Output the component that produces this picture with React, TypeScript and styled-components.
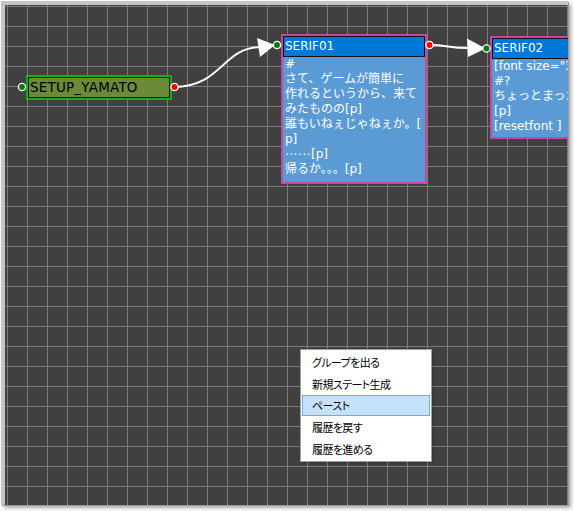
import React from "react";
import styled, { createGlobalStyle } from "styled-components";

const GlobalStyle = createGlobalStyle`
  html, body { margin: 0; padding: 0; background: #ffffff; }
  #root { width: 574px; height: 511px; }
`;

// canvas content origin in page coordinates
const OX = 5;
const OY = 5;

const Page = styled.div`
  width: 574px;
  height: 511px;
  box-sizing: border-box;
  padding: 1px 0 0 1px;
  background: #ffffff;
  overflow: hidden;
`;

const Canvas = styled.div`
  position: relative;
  width: 563px;
  height: 500px;
  border-left: 4px solid #c6c6c6;
  border-top: 4px solid #c6c6c6;
  background-color: #404040;
  background-image: linear-gradient(to right, #7c7c7c 1px, transparent 1px),
    linear-gradient(to bottom, #7c7c7c 1px, transparent 1px);
  background-size: 20px 20px;
  background-position: 2px 1px;
  box-shadow: 1px 1px 0 #9a9a9a, 3px 3px 4px rgba(0, 0, 0, 0.35);
  overflow: hidden;
  font-family: "DejaVu Sans", "Noto Sans CJK JP", sans-serif;
`;

const Placed = styled.div<{ $x: number; $y: number }>`
  position: absolute;
  left: ${(p) => p.$x - OX}px;
  top: ${(p) => p.$y - OY}px;
`;

const SetupNode = styled(Placed)`
  width: 146px;
  height: 25px;
  box-sizing: border-box;
  border: 2px solid #12b012;
  box-shadow: inset 0 0 0 1px #1c1c1c;
  background: #6b8a3a;
  color: #000;
  font-size: 13.5px;
  letter-spacing: 0.2px;
  line-height: 21px;
  padding-left: 2px;
  white-space: nowrap;
`;

const SerifNode = styled(Placed)<{ $h: number }>`
  width: 146px;
  height: ${(p) => p.$h}px;
  box-sizing: border-box;
  border: 2px solid #c8489e;
  display: flex;
  flex-direction: column;
  background: #5b9bd5;
`;

const Title = styled.div`
  height: 21px;
  box-sizing: border-box;
  border: 1px solid #111;
  background: #0078d7;
  color: #fff;
  font-size: 12px;
  line-height: 19px;
  padding-left: 1px;
  white-space: nowrap;
  overflow: hidden;
`;

const Body = styled.div`
  flex: 1;
  padding: 0 2px;
  color: #fff;
  font-size: 12px;
  overflow: hidden;
  display: flex;
  flex-direction: column;
`;

const Line = styled.div`
  height: 15px;
  line-height: 15px;
  white-space: pre;
`;

const Dots = styled.span`
  letter-spacing: 1px;
`;

const Edges = styled.svg`
  position: absolute;
  left: 0;
  top: 0;
  width: 563px;
  height: 500px;
  pointer-events: none;
`;

const Menu = styled(Placed)`
  width: 132px;
  height: 113px;
  box-sizing: border-box;
  border: 1px solid #a0a0a0;
  background: #fff;
  padding: 1px 1px;
  display: flex;
  flex-direction: column;
  font-family: "Noto Sans CJK JP", sans-serif;
  font-feature-settings: "palt";
  box-shadow: 1px 1px 2px rgba(0, 0, 0, 0.2);
`;

const MenuItem = styled.div<{ $active?: boolean }>`
  height: 22px;
  box-sizing: border-box;
  display: flex;
  align-items: center;
  padding-left: 9px;
  font-size: 11px;
  letter-spacing: -0.6px;
  color: #000;
  border: 1px solid ${(p) => (p.$active ? "#6aaeee" : "transparent")};
  background: ${(p) => (p.$active ? "#c6e1fb" : "transparent")};
`;

const serif01 = [
  "#",
  "さて、ゲームが簡単に",
  "作れるというから、来て",
  "みたものの[p]",
  "誰もいねぇじゃねぇか。[",
  "p]",
];

const serif02 = ['[font size="30"]', "#?", "ちょっとまったー！", "[p]", "[resetfont ]"];

const Port: React.FC<{ x: number; y: number; out?: boolean }> = ({ x, y, out }) => (
  <circle cx={x} cy={y} r={3.6} fill={out ? "#ff0000" : "#0a7a0a"} stroke="#ffffff" strokeWidth={1.3} />
);

export default function App() {
  return (
    <>
      <GlobalStyle />
      <Page>
        <Canvas>
          <SetupNode $x={26} $y={75}>SETUP_YAMATO</SetupNode>

          <SerifNode $x={281} $y={34} $h={150}>
            <Title>SERIF01</Title>
            <Body>
              {serif01.map((l, i) => (
                <Line key={i}>{l}</Line>
              ))}
              <Line>
                <Dots>⋯⋯</Dots>[p]
              </Line>
              <Line>帰るか。。。[p]</Line>
            </Body>
          </SerifNode>

          <SerifNode $x={490} $y={36} $h={103}>
            <Title>SERIF02</Title>
            <Body>
              {serif02.map((l, i) => (
                <Line key={i}>{l}</Line>
              ))}
            </Body>
          </SerifNode>

          <Edges viewBox={`${OX} ${OY} 563 500`}>
            <path d="M174,87 C222,87 222,47 262,47" fill="none" stroke="#fff" strokeWidth={2} />
            <polygon points="257,38 275,45 260,57" fill="#fff" />
            <path d="M429,45 C448,45 448,48 468,48" fill="none" stroke="#fff" strokeWidth={2} />
            <polygon points="467,38.5 485.5,48.5 468,57" fill="#fff" />
            <Port x={22} y={87} />
            <Port x={174.5} y={87} out />
            <Port x={277} y={45} />
            <Port x={429.5} y={45} out />
            <Port x={486.5} y={48.5} />
          </Edges>

          <Menu $x={300} $y={349}>
            <MenuItem>グループを出る</MenuItem>
            <MenuItem>新規ステート生成</MenuItem>
            <MenuItem $active>ペースト</MenuItem>
            <MenuItem>履歴を戻す</MenuItem>
            <MenuItem>履歴を進める</MenuItem>
          </Menu>
        </Canvas>
      </Page>
    </>
  );
}
